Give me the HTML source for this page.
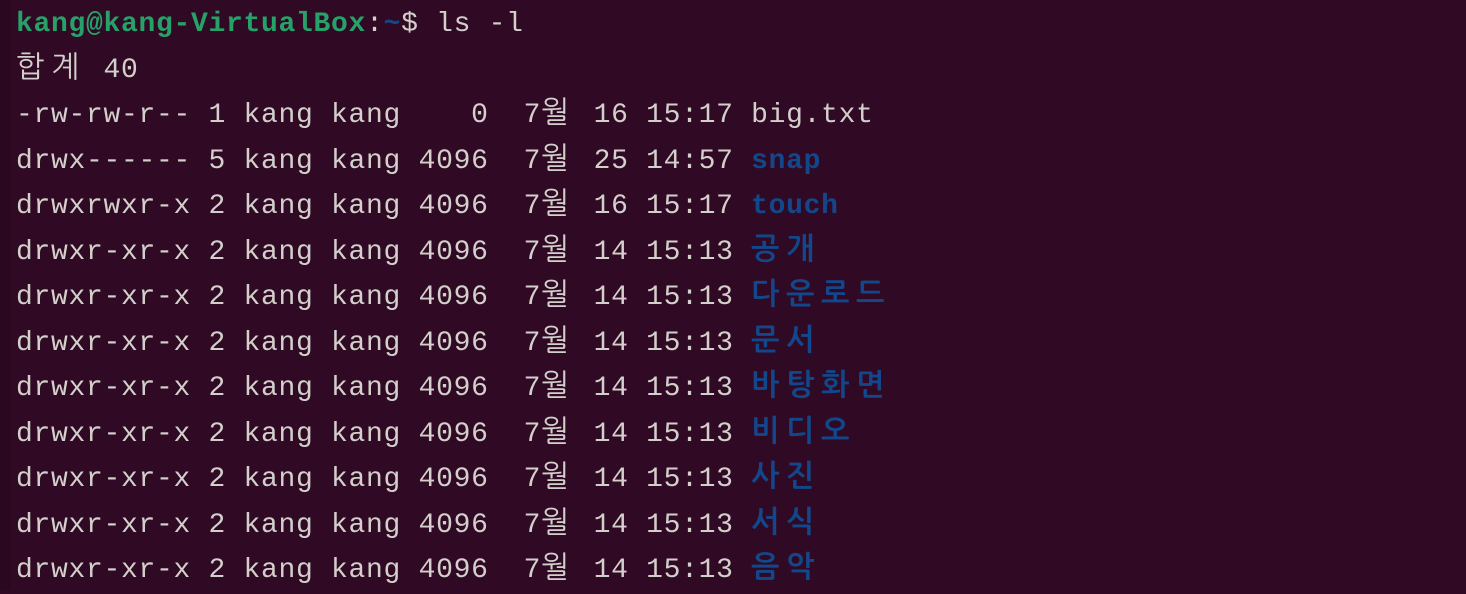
<!DOCTYPE html>
<html><head><meta charset="utf-8"><style>
html,body{margin:0;padding:0;}
body{width:1466px;height:590px;overflow:hidden;background:#300a24;position:relative;}
.edge{position:absolute;left:0;top:0;width:11px;height:590px;background:#2a0820;}
.w{position:absolute;left:16px;top:2px;font-family:"Liberation Mono","NanumGothic",monospace;font-size:28px;letter-spacing:0.7px;color:#d3d0cc;}
.w div{height:45.5px;line-height:45.5px;white-space:pre;overflow:visible;}
.k{display:inline-block;width:35px;line-height:28px;text-align:left;font-family:"NanumGothic","Noto Sans CJK KR",sans-serif;letter-spacing:0;font-size:30px;}
.g{color:#26a269;font-weight:bold}
.b{color:#12488b;font-weight:bold}
.t{color:#12488b;font-weight:bold}
</style></head><body><div class="edge"></div>
<div class="w">
<div><span class="g">kang@kang-VirtualBox</span>:<span class="t">~</span>$ ls -l</div>
<div><span class="k">합</span><span class="k">계</span> 40</div>
<div>-rw-rw-r-- 1 kang kang    0  7<span class="k">월</span> 16 15:17 big.txt</div>
<div>drwx------ 5 kang kang 4096  7<span class="k">월</span> 25 14:57 <span class="b">snap</span></div>
<div>drwxrwxr-x 2 kang kang 4096  7<span class="k">월</span> 16 15:17 <span class="b">touch</span></div>
<div>drwxr-xr-x 2 kang kang 4096  7<span class="k">월</span> 14 15:13 <span class="b"><span class="k">공</span><span class="k">개</span></span></div>
<div>drwxr-xr-x 2 kang kang 4096  7<span class="k">월</span> 14 15:13 <span class="b"><span class="k">다</span><span class="k">운</span><span class="k">로</span><span class="k">드</span></span></div>
<div>drwxr-xr-x 2 kang kang 4096  7<span class="k">월</span> 14 15:13 <span class="b"><span class="k">문</span><span class="k">서</span></span></div>
<div>drwxr-xr-x 2 kang kang 4096  7<span class="k">월</span> 14 15:13 <span class="b"><span class="k">바</span><span class="k">탕</span><span class="k">화</span><span class="k">면</span></span></div>
<div>drwxr-xr-x 2 kang kang 4096  7<span class="k">월</span> 14 15:13 <span class="b"><span class="k">비</span><span class="k">디</span><span class="k">오</span></span></div>
<div>drwxr-xr-x 2 kang kang 4096  7<span class="k">월</span> 14 15:13 <span class="b"><span class="k">사</span><span class="k">진</span></span></div>
<div>drwxr-xr-x 2 kang kang 4096  7<span class="k">월</span> 14 15:13 <span class="b"><span class="k">서</span><span class="k">식</span></span></div>
<div>drwxr-xr-x 2 kang kang 4096  7<span class="k">월</span> 14 15:13 <span class="b"><span class="k">음</span><span class="k">악</span></span></div>
</div>
</body></html>
